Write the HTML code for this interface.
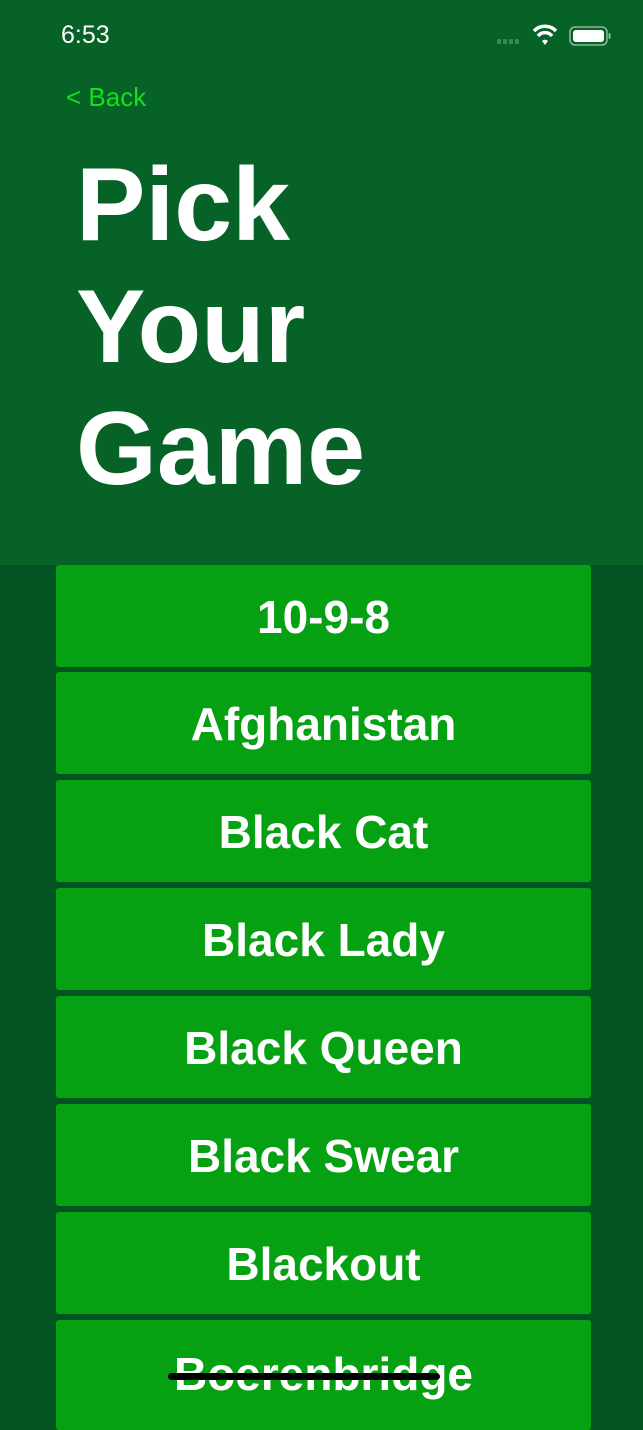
<!DOCTYPE html>
<html><head><style>
body{margin:0;width:643px;height:1392px;overflow:hidden;background:#045322;font-family:"Liberation Sans",sans-serif;position:relative}
.hdr{position:absolute;left:0;top:0;width:643px;height:565px;background:#066226}
.time{position:absolute;left:61px;top:21px;color:#fff;font-size:25px}
.back{position:absolute;left:66px;top:82px;color:#12e21a;font-size:26px}
.title{position:absolute;left:76px;top:144px;color:#fff;font-weight:bold;font-size:104px;line-height:122px}
.btn{position:absolute;left:56px;width:535px;height:102px;background:#06a112;border-radius:3px;color:#fff;font-weight:bold;font-size:46px;text-align:center;line-height:104px}
.strike{position:absolute;left:168px;top:1373px;width:272px;height:7px;background:#000;border-radius:4px}
</style></head><body>
<div class="hdr"></div>
<div class="time">6:53</div>
<svg style="position:absolute;left:495px;top:22px" width="120" height="26">
<g fill="#3c8a50"><rect x="2" y="17" width="4" height="5" rx="1"/><rect x="8" y="17" width="4" height="5" rx="1"/><rect x="14" y="17" width="4" height="5" rx="1"/><rect x="20" y="17" width="4" height="5" rx="1"/></g>
<path d="M39 9a15 15 0 0 1 22 0" stroke="#fff" stroke-width="3.5" fill="none"/>
<path d="M43 14a9 9 0 0 1 14 0" stroke="#fff" stroke-width="3.5" fill="none"/>
<path d="M47 19l3 4 3-4a4 4 0 0 0-6 0z" fill="#fff"/>
<rect x="75" y="5" width="37" height="18" rx="5" fill="none" stroke="#8fb89a" stroke-width="1.5"/>
<rect x="78" y="8" width="31" height="12" rx="3" fill="#fff"/>
<rect x="113.5" y="11" width="2" height="6" rx="1" fill="#8fb89a"/>
</svg>
<div class="back">&lt; Back</div>
<div class="title">Pick<br>Your<br>Game</div>
<div class="btn" style="top:565px">10-9-8</div>
<div class="btn" style="top:672px">Afghanistan</div>
<div class="btn" style="top:780px">Black Cat</div>
<div class="btn" style="top:888px">Black Lady</div>
<div class="btn" style="top:996px">Black Queen</div>
<div class="btn" style="top:1104px">Black Swear</div>
<div class="btn" style="top:1212px">Blackout</div>
<div class="btn" style="top:1320px;height:110px;line-height:108px">Boerenbridge</div>
<div class="strike"></div>
</body></html>
